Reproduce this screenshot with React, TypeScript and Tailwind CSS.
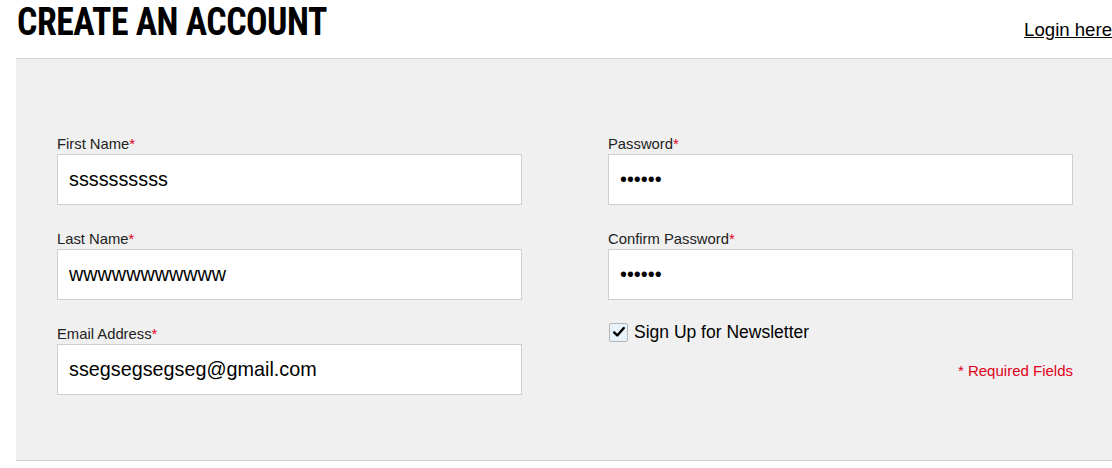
import React from 'react';

const Field: React.FC<{ label: string; value: string; type?: string; last?: boolean }> = ({ label, value, type = 'text', last }) => (
    <div className={last ? '' : 'mb-[26px]'}>
        <label className="block text-[14.8px] leading-[17px] text-[#222] mb-[1px]">
            {label}
            <span className="text-[#e0001b]">*</span>
        </label>
        <input
            type={type}
            defaultValue={value}
            readOnly
            className="block w-full h-[51px] bg-white border border-[#cfcfcf] px-[11px] text-[19.8px] text-black outline-none font-['Liberation_Sans',Arial,sans-serif]"
        />
    </div>
);

export default function App() {
    return (
        <div className="w-[1112px] h-[468px] bg-white font-['Liberation_Sans',Arial,sans-serif] overflow-hidden">
            <div className="h-[58px] flex items-start justify-between pl-[17px]">
                <h1 className="mt-[4px] text-[38px] leading-[36px] font-bold text-black tracking-[-0.5px] font-['Roboto_Condensed','Roboto',sans-serif] [font-stretch:condensed] origin-left scale-x-[0.94]">
                    CREATE AN ACCOUNT
                </h1>
                <a href="#" className="mt-[19px] text-[18.6px] leading-[22px] text-black underline">
                    Login here
                </a>
            </div>
            <div className="ml-[16px] h-[403px] border-y border-[#d4d4d4] bg-[#f0f0f0] pt-[77px] pl-[41px] pr-[39px]">
                <div className="grid grid-cols-[465px_465px] gap-x-[86px]">
                    <div>
                        <Field label="First Name" value="ssssssssss" />
                        <Field label="Last Name" value="wwwwwwwwwww" />
                        <Field label="Email Address" value="ssegsegsegseg@gmail.com" last />
                    </div>
                    <div>
                        <Field label="Password" value="abcdef" type="password" />
                        <Field label="Confirm Password" value="abcdef" type="password" />
                        <div className="flex items-center gap-[6px] ml-[1px] mt-[-5px]">
                            <span className="w-[19px] h-[19px] rounded-[2px] border border-[#b5b5b5] bg-[#e6f3fc] flex items-center justify-center">
                                <svg viewBox="0 0 16 16" className="w-[14px] h-[14px]">
                                    <path d="M2.5 8.5 L6 12 L13.5 3.5" fill="none" stroke="black" strokeWidth={2.8} strokeLinecap="round" strokeLinejoin="round" />
                                </svg>
                            </span>
                            <span className="text-[17.5px] leading-[22px] text-black">Sign Up for Newsletter</span>
                        </div>
                        <div className="text-right text-[15px] leading-[17px] text-[#e0001b] mt-[19px]">* Required Fields</div>
                    </div>
                </div>
            </div>
        </div>
    );
}
